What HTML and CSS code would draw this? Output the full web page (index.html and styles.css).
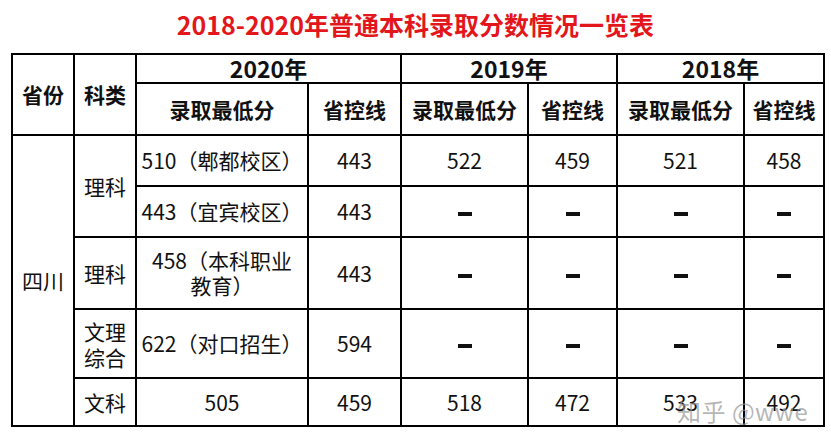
FILE: index.html
```html
<!DOCTYPE html>
<html lang="zh">
<head>
<meta charset="utf-8">
<link rel="stylesheet" href="styles.css">
</head>
<body>
<div class="page">
  <h1 class="title">2018-2020年普通本科录取分数情况一览表</h1>
  <div class="table-wrap">
    <table class="scores">
      <colgroup>
        <col class="c1"><col class="c2"><col class="c3"><col class="c4">
        <col class="c5"><col class="c6"><col class="c7"><col class="c8">
      </colgroup>
      <tr class="r1">
        <th rowspan="2" class="hd">省份</th>
        <th rowspan="2" class="hd">科类</th>
        <th colspan="2" class="year">2020年</th>
        <th colspan="2" class="year">2019年</th>
        <th colspan="2" class="year">2018年</th>
      </tr>
      <tr class="r2">
        <th class="hd">录取最低分</th>
        <th class="hd">省控线</th>
        <th class="hd">录取最低分</th>
        <th class="hd">省控线</th>
        <th class="hd">录取最低分</th>
        <th class="hd">省控线</th>
      </tr>
      <tr class="r3">
        <td rowspan="5">四川</td>
        <td rowspan="2">理科</td>
        <td>510（郫都校区）</td>
        <td>443</td>
        <td>522</td>
        <td>459</td>
        <td>521</td>
        <td>458</td>
      </tr>
      <tr class="r4">
        <td>443（宜宾校区）</td>
        <td>443</td>
        <td><span class="dash"></span></td>
        <td><span class="dash"></span></td>
        <td><span class="dash"></span></td>
        <td><span class="dash"></span></td>
      </tr>
      <tr class="r5">
        <td>理科</td>
        <td>458（本科职业<br>教育）</td>
        <td>443</td>
        <td><span class="dash"></span></td>
        <td><span class="dash"></span></td>
        <td><span class="dash"></span></td>
        <td><span class="dash"></span></td>
      </tr>
      <tr class="r6">
        <td class="two">文理<br>综合</td>
        <td>622（对口招生）</td>
        <td>594</td>
        <td><span class="dash"></span></td>
        <td><span class="dash"></span></td>
        <td><span class="dash"></span></td>
        <td><span class="dash"></span></td>
      </tr>
      <tr class="r7">
        <td>文科</td>
        <td>505</td>
        <td>459</td>
        <td>518</td>
        <td>472</td>
        <td>533</td>
        <td>492</td>
      </tr>
    </table>
    <div class="watermark">知乎 @wwe</div>
  </div>
</div>
</body>
</html>
```

FILE: styles.css
```css
html, body {
  margin: 0;
  padding: 0;
  background: #fff;
}
body {
  font-family: "Noto Sans CJK SC", "Noto Sans", sans-serif;
  color: #111;
  width: 831px;
  height: 447px;
  overflow: hidden;
}
.page {
  display: flex;
  flex-direction: column;
}
.title {
  margin: 0;
  height: 53px;
  display: flex;
  align-items: center;
  justify-content: center;
  font-size: 25px;
  font-weight: 700;
  color: #e3161c;
  line-height: 1;
  padding-bottom: 4px;
  box-sizing: border-box;
  letter-spacing: 0;
}
.table-wrap {
  position: relative;
  margin-left: 11px;
  width: 814px;
}
.scores {
  border-collapse: collapse;
  table-layout: fixed;
  width: 814px;
}
.scores th, .scores td {
  border: 2px solid #000;
  padding: 0;
  text-align: center;
  vertical-align: middle;
  font-size: 21px;
  line-height: 25px;
  white-space: nowrap;
}
.scores td { font-weight: 400; }
.scores td.two { line-height: 26px; }
.scores th.hd { font-weight: 700; font-size: 21px; }
.scores th.year { font-weight: 700; font-size: 23px; line-height: 27px; }
.c1 { width: 62px; }
.c2 { width: 62px; }
.c3 { width: 172px; }
.c4 { width: 93px; }
.c5 { width: 127px; }
.c6 { width: 89px; }
.c7 { width: 127px; }
.c8 { width: 80px; }
.r1 { height: 29px; }
.r2 { height: 52px; }
.r3 { height: 51px; }
.r4 { height: 51px; }
.r5 { height: 72px; }
.r6 { height: 69px; }
.r7 { height: 48px; }
.dash {
  display: inline-block;
  width: 14px;
  height: 4px;
  background: #111;
  vertical-align: middle;
}
.watermark {
  position: absolute;
  left: 666px;
  top: 343px;
  font-size: 24px;
  line-height: 30px;
  color: rgba(150, 150, 150, 0.7);
  font-family: "Noto Sans CJK SC", "Noto Sans", sans-serif;
  font-weight: 400;
  letter-spacing: 0.5px;
  white-space: nowrap;
}
```
